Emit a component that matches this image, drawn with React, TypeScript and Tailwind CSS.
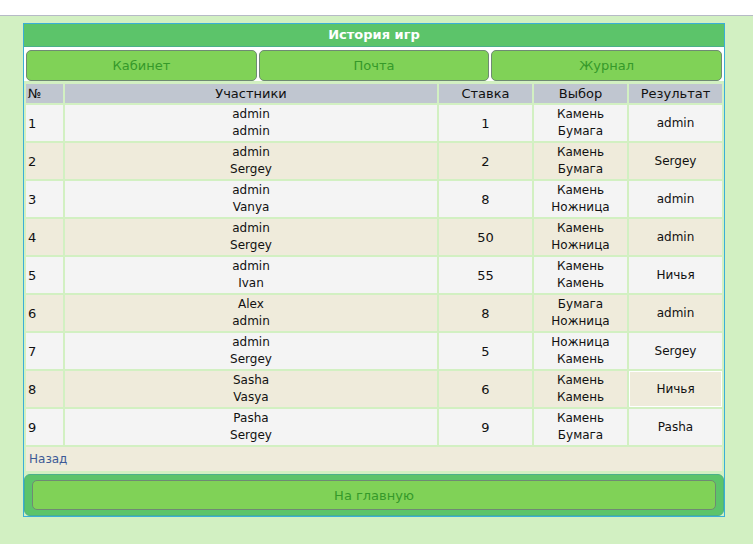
const games = [
	{ n: 1, players: ["admin", "admin"], bet: 1, pick: ["Камень", "Бумага"], result: "admin" },
	{ n: 2, players: ["admin", "Sergey"], bet: 2, pick: ["Камень", "Бумага"], result: "Sergey" },
	{ n: 3, players: ["admin", "Vanya"], bet: 8, pick: ["Камень", "Ножница"], result: "admin" },
	{ n: 4, players: ["admin", "Sergey"], bet: 50, pick: ["Камень", "Ножница"], result: "admin" },
	{ n: 5, players: ["admin", "Ivan"], bet: 55, pick: ["Камень", "Камень"], result: "Ничья" },
	{ n: 6, players: ["Alex", "admin"], bet: 8, pick: ["Бумага", "Ножница"], result: "admin" },
	{ n: 7, players: ["admin", "Sergey"], bet: 5, pick: ["Ножница", "Камень"], result: "Sergey" },
	{ n: 8, players: ["Sasha", "Vasya"], bet: 6, pick: ["Камень", "Камень"], result: "Ничья" },
	{ n: 9, players: ["Pasha", "Sergey"], bet: 9, pick: ["Камень", "Бумага"], result: "Pasha" },
]

const tabs = ["Кабинет", "Почта", "Журнал"]

const App = () => {
	return (
		<div className="min-h-[544px] bg-[#d2f0c2] font-['DejaVu_Sans',sans-serif] text-[12px] leading-[17px] text-[#111]">
			<div className="h-4 bg-white border-b border-[#b6bac6]" />
			<div className="pl-[23px] pt-[7px]">
				<div className="w-[702px] border border-[#3aaed8] bg-[#d2f0c2]">
					<div className="h-[23px] bg-[#5cc46a] border-b border-[#4bb08a] text-center font-bold text-white text-[13px] leading-[22px]">
						История игр
					</div>
					<div className="flex gap-[2px] px-[2px] pt-[3px] bg-white">
						{tabs.map((t) => (
							<div
								key={t}
								className="flex-1 h-[31px] flex items-center justify-center rounded-[5px] border border-[#6f8a73] bg-[#80d257] text-[#35992a] text-[13px]"
							>
								{t}
							</div>
						))}
					</div>
					<div className="grid grid-cols-[37px_372px_93px_93px_93px] gap-[2px] px-[2px] pt-[3px] pb-[2px]">
						<div className="h-[19px] bg-[#c0c6d0] pl-[2px] leading-[19px] text-[13px]">№</div>
						<div className="h-[19px] bg-[#c0c6d0] text-center leading-[19px] text-[13px]">Участники</div>
						<div className="h-[19px] bg-[#c0c6d0] text-center leading-[19px] text-[13px]">Ставка</div>
						<div className="h-[19px] bg-[#c0c6d0] text-center leading-[19px] text-[13px]">Выбор</div>
						<div className="h-[19px] bg-[#c0c6d0] text-center leading-[19px] text-[13px]">Результат</div>
						{games.map((g, i) => {
							const bg = i % 2 === 0 ? "bg-[#f4f4f4]" : "bg-[#efebdb]"
							return (
								<div key={g.n} className="contents">
									<div className={`h-[36px] ${bg} pl-[2px] flex items-center text-[13px]`}>{g.n}</div>
									<div className={`h-[36px] ${bg} flex flex-col items-center justify-center`}>
										<span>{g.players[0]}</span>
										<span>{g.players[1]}</span>
									</div>
									<div className={`h-[36px] ${bg} flex items-center justify-center text-[13px]`}>{g.bet}</div>
									<div className={`h-[36px] ${bg} flex flex-col items-center justify-center`}>
										<span>{g.pick[0]}</span>
										<span>{g.pick[1]}</span>
									</div>
									<div
										className={`h-[36px] ${bg} flex items-center justify-center ${
											g.n === 8 ? "border border-white" : ""
										}`}
									>
										{g.result}
									</div>
								</div>
							)
						})}
						<div className="col-span-5 h-[24px] bg-[#efebdb] pl-[3px] flex items-center text-[#3d5a96]">
							Назад
						</div>
					</div>
					<div className="mt-px h-[42px] rounded-[6px] border border-[#4bb08a] bg-[#5cc46a] px-[7px] pt-[5px]">
						<div className="h-[30px] rounded-[5px] border border-[#6f8a73] bg-[#80d257] flex items-center justify-center text-[#35992a] text-[13px]">
							На главную
						</div>
					</div>
				</div>
			</div>
		</div>
	)
}

export default App
